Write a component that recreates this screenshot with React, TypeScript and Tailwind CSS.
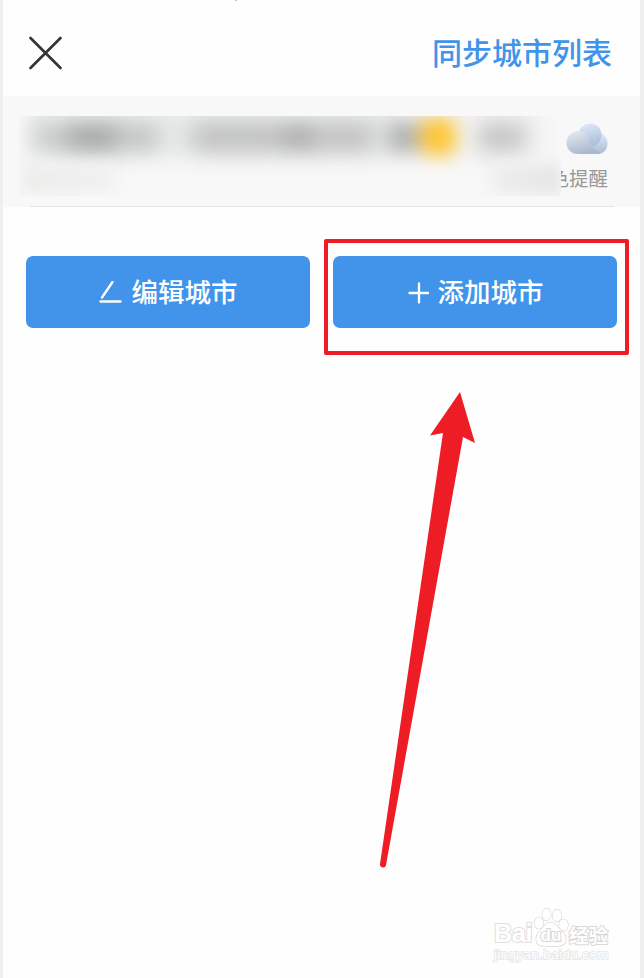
import React from 'react';

const sans = "font-['Noto_Sans_CJK_SC','Noto_Sans',sans-serif]";

function Header() {
  return (
    <header className="flex h-24 items-center justify-between bg-[#fefefe] pt-[9px] pr-[28px] pl-[25px]">
      <svg className="h-[34px] w-[34px]" viewBox="0 0 34 34" stroke="#343437" strokeWidth="2.6" strokeLinecap="round">
        <path d="M2.500 2 32.500 32M32.500 2 2.500 32" />
      </svg>
      <span className="pb-[3px] text-[30px] leading-[42px] font-medium whitespace-nowrap text-[#4194ea]">同步城市列表</span>
    </header>
  );
}

function Cloud() {
  return (
    <svg className="h-[32px] w-[42px]" viewBox="0 0 42 32">
      <defs>
        <linearGradient id="cloudBack" x1="0.3" y1="0" x2="0.6" y2="1">
          <stop offset="0" stopColor="#dfe8f6" />
          <stop offset="1" stopColor="#a9bdd8" />
        </linearGradient>
        <linearGradient id="cloudRight" x1="0.5" y1="0" x2="0.4" y2="1">
          <stop offset="0" stopColor="#dce8fa" />
          <stop offset="1" stopColor="#a9b9d0" />
        </linearGradient>
        <linearGradient id="cloudFront" x1="0.2" y1="0" x2="0.6" y2="1">
          <stop offset="0" stopColor="#e2e8ef" />
          <stop offset="1" stopColor="#a6b6cc" />
        </linearGradient>
      </defs>
      <path d="M12 31V20L32 10C38 10 41.500 15 41.500 20.500C41.500 27 37 31 31 31Z" fill="url(#cloudRight)" />
      <circle cx="24" cy="12" r="11.500" fill="url(#cloudBack)" />
      <path d="M12 8C19 8 23 13 23.500 20C26 25 29 28 35 30.400Q33 31 31 31H12C5 31 .5 26 .5 20S5 8 12 8Z" fill="url(#cloudFront)" />
    </svg>
  );
}

function HiddenDetails() {
  return (
    <div className="absolute top-[20px] left-[16px] flex h-[80px] w-[542px] flex-col justify-between overflow-hidden bg-[#f8f8f8]">
      <div className="-mt-2 ml-2 flex h-[50px] w-[516px] items-center bg-gradient-to-r from-[#e6e9e8] from-70% to-[#f1f1f1] pt-2 pl-2 blur-[9px]">
        <div className="h-[25px] w-[30px] bg-[#c8cbca] blur-[6px]" />
        <div className="h-[27px] w-[56px] bg-[#a2a4a3] blur-[7px]" />
        <div className="h-[25px] w-[36px] bg-[#bfc2c0] blur-[6px]" />
        <div className="ml-[36px] h-[27px] w-[86px] bg-[#bebebe] blur-[7px]" />
        <div className="h-[25px] w-[40px] bg-[#a6a6a6] blur-[7px]" />
        <div className="h-[27px] w-[54px] bg-[#bfbfbf] blur-[7px]" />
        <div className="ml-[16px] h-[27px] w-[30px] bg-[#ababab] blur-[5px]" />
        <div className="h-[38px] w-[38px] rounded-xl bg-[#ffc83a]" />
        <div className="h-[50px] w-[22px] bg-[#f3f3f2] blur-[2px]" />
        <div className="h-[27px] w-[46px] bg-[#c4c4c4] blur-[6px]" />
      </div>
      <div className="flex h-[31px] items-start justify-between pl-1">
        <div className="h-[28px] w-[90px] bg-gradient-to-r from-[#ececeb] to-[#f0f0f0] blur-[7px]" />
        <div className="h-[29px] w-[70px] bg-gradient-to-r from-[#eeeeee] to-[#e4e4e4] blur-[7px]" />
      </div>
    </div>
  );
}

function CityRow() {
  return (
    <section className="relative flex h-[111px] flex-col bg-[#f8f8f8] pr-[26px] pl-[27px]">
      <div className="flex flex-1 flex-col items-end gap-[9px] pt-[27px] pr-[6px]">
        <Cloud />
        <span className="text-[19.5px] leading-[28px] whitespace-nowrap text-[#999]">色提醒</span>
      </div>
      <div className="h-px bg-[#e5e5e5]" />
      <HiddenDetails />
    </section>
  );
}

function CityButton({ label, children }: { label: string; children: React.ReactNode }) {
  return (
    <button className="flex h-[72px] w-[284px] items-center justify-center gap-[9px] rounded-[7px] bg-[#4294ea] pt-[2px] text-white">
      {children}
      <span className="pb-[4px] text-[26.5px] leading-[36px] font-medium whitespace-nowrap">{label}</span>
    </button>
  );
}

function Arrow() {
  return (
    <svg className="absolute top-[391px] left-[373px] h-[480px] w-[102px]" viewBox="376 391 102 480">
      <path d="M460 392 475 443 463 437 386 865A3 3 0 0 1 380 864L443 433 430 435.500Z" fill="#ee1c25" />
    </svg>
  );
}

function Watermark() {
  return (
    <div className="absolute top-[907px] left-[491px] flex w-[118px] flex-col font-['Liberation_Sans',sans-serif] text-white [paint-order:stroke_fill] [-webkit-text-stroke:2px_#e0e0e0]">
      <div className="flex h-[41px] items-end">
        <span className="w-[39px] text-[25.5px] leading-[30px] font-bold tracking-[-0.6px]">Bai</span>
        <div className="grid w-[36px] items-end">
          <svg className="col-start-1 row-start-1 h-[41px] w-[36px]" viewBox="0 0 36 41" fill="#fff" stroke="#d9d9d9" strokeWidth="1.300">
            <ellipse cx="6" cy="16" rx="4.500" ry="5.700" />
            <ellipse cx="13.500" cy="7.500" rx="4.300" ry="6" />
            <ellipse cx="24" cy="8.500" rx="4.300" ry="6" />
            <ellipse cx="30.500" cy="18" rx="4.500" ry="5.700" />
            <path d="M17.500 15.500C22 15.500 24 20 29 24C35 30 34 39 25 39H11C2 39 1 30 7 24C11 20 13 15.500 17.500 15.500Z" />
          </svg>
          <span className="relative col-start-1 row-start-1 pb-[2px] text-center text-[17px] leading-[20px] font-bold [-webkit-text-stroke:2px_#d5d5d5]">du</span>
        </div>
        <span className="text-[19.5px] leading-[26px] font-bold whitespace-nowrap font-['Noto_Sans_CJK_SC',sans-serif] [-webkit-text-stroke:2px_#d9d9d9]">经验</span>
      </div>
      <span className="text-[13.5px] leading-[14px] tracking-[0.35px] whitespace-nowrap [-webkit-text-stroke:1.6px_#e5e5e5]">jingyan.baidu.com</span>
    </div>
  );
}

export default function App() {
  return (
    <div className={`relative flex h-[978px] w-[644px] flex-col overflow-hidden border-r-4 border-l-[3px] border-[#efefef] bg-[#fefefe] ${sans}`}>
      <Header />
      <CityRow />
      <main className="flex items-center gap-[14px] pt-[32px] pl-[23px]">
        <div className="pb-[10px]">
          <CityButton label="编辑城市">
            <svg className="h-[24px] w-[24px]" viewBox="0 0 24 24" fill="none" stroke="#fff" strokeWidth="2.300" strokeLinecap="round">
              <path d="M13.500 1 3 16.500M1.500 20.500H21.500" />
            </svg>
          </CityButton>
        </div>
        <div className="h-[116px] w-[305px] rounded-[2px] border-4 border-[#ee1c25] pt-[13px] pl-[5px]">
          <CityButton label="添加城市">
            <svg className="h-[22px] w-[22px]" viewBox="0 0 22 22" stroke="#fff" strokeWidth="2.300" strokeLinecap="round">
              <path d="M12 1.500V20.500M2.500 11H21.500" />
            </svg>
          </CityButton>
        </div>
      </main>
      <div className="absolute top-0 left-[232px] h-px w-[2px] bg-[#c5c5c5]" />
      <Arrow />
      <Watermark />
    </div>
  );
}
